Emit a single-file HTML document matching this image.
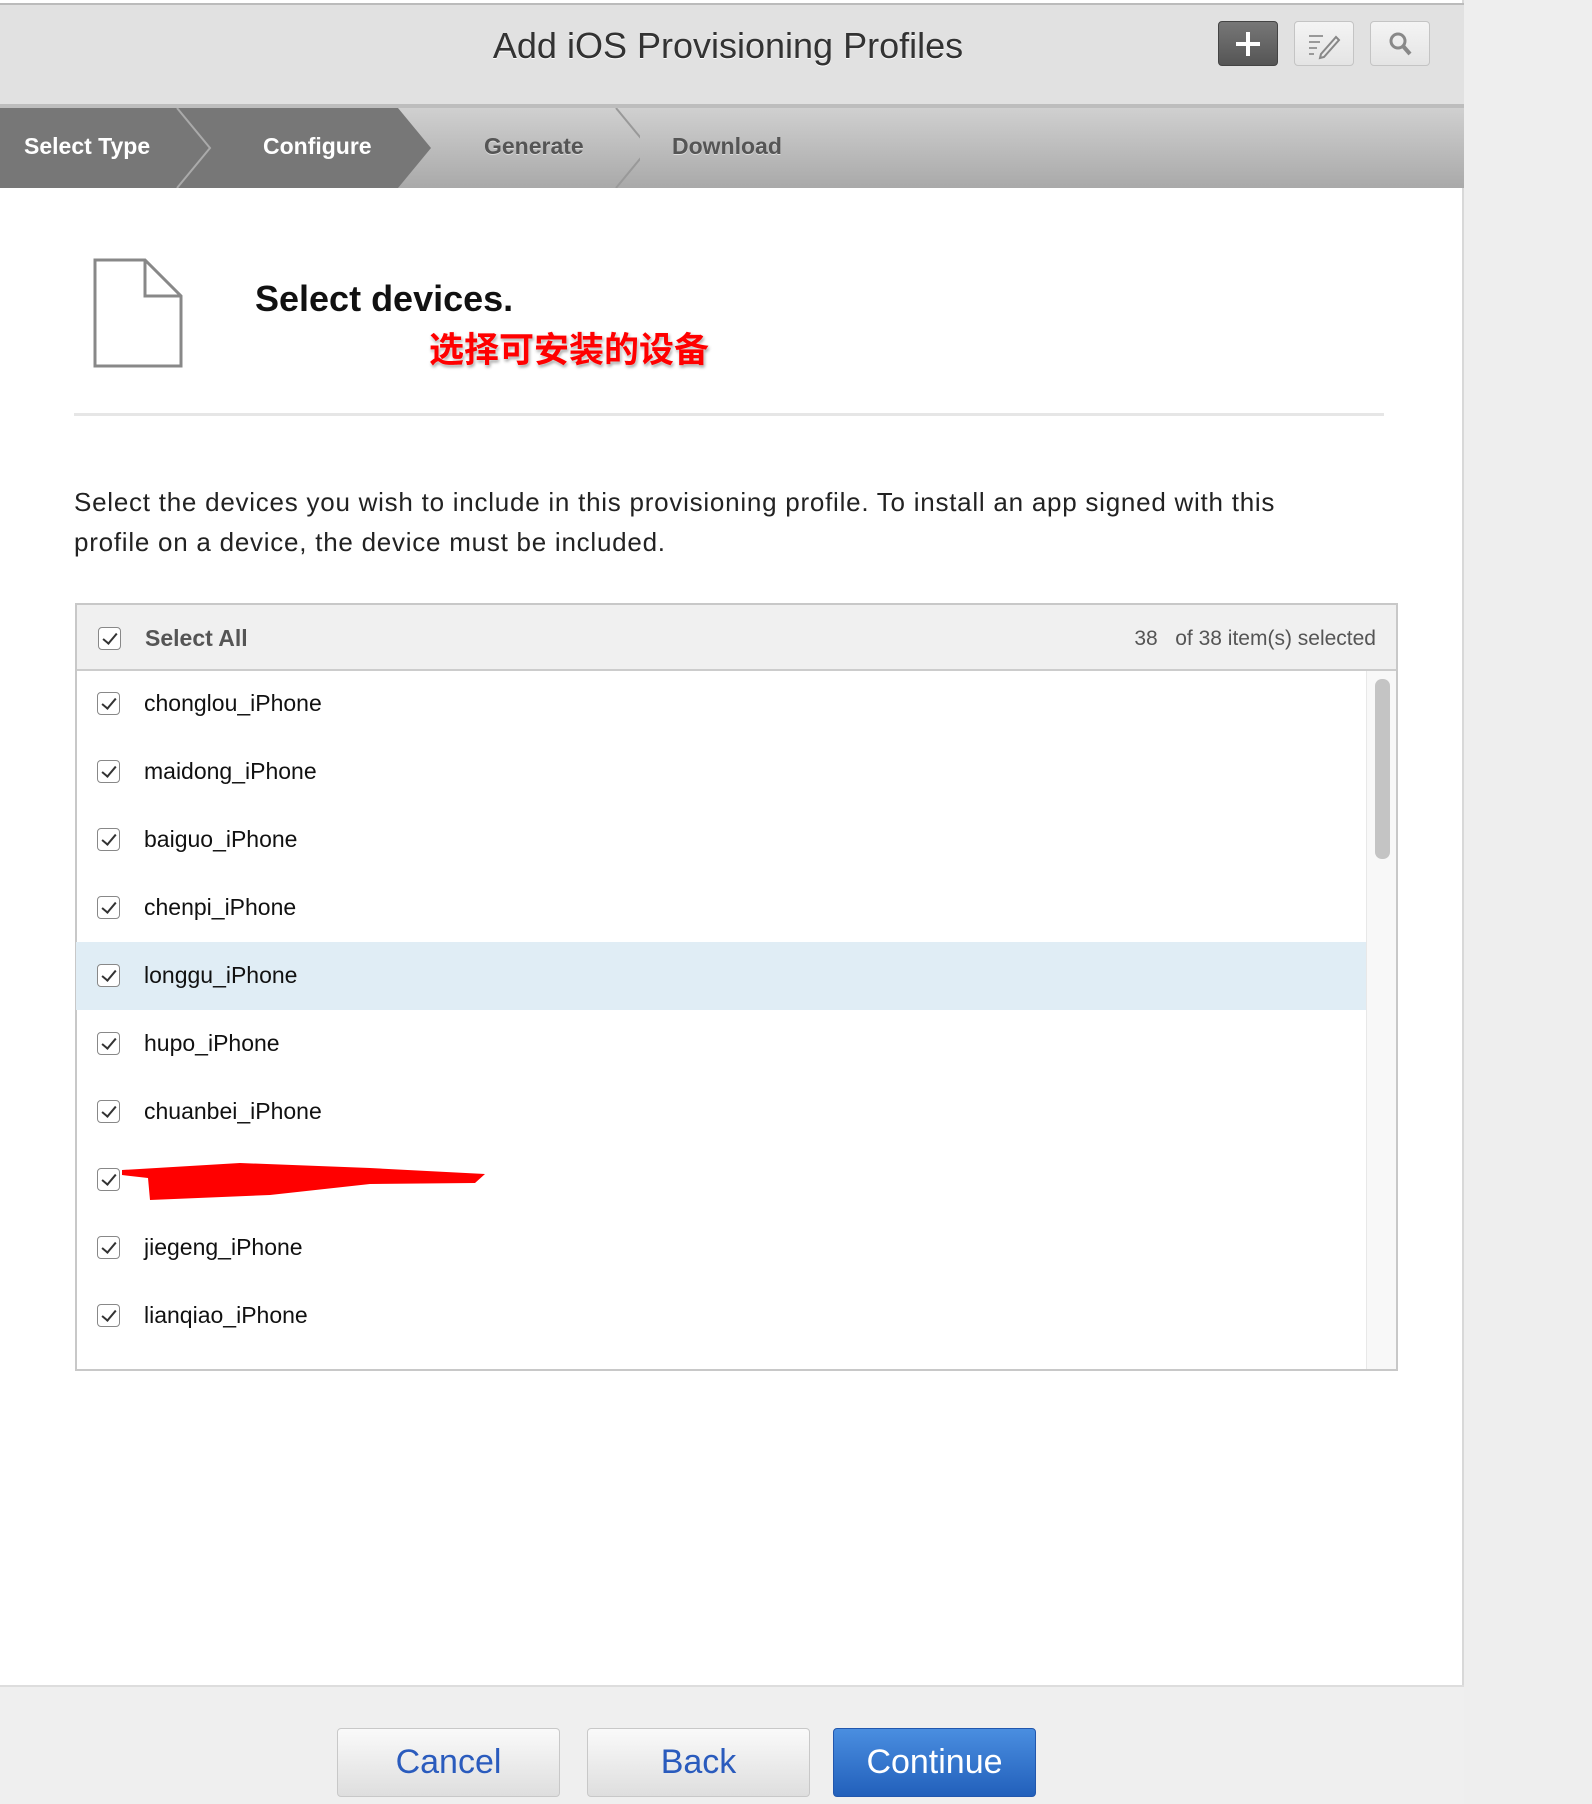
<!DOCTYPE html>
<html><head><meta charset="utf-8"><style>
*{margin:0;padding:0;box-sizing:border-box}
body{width:1592px;height:1804px;background:#eeeeee;font-family:"Liberation Sans",Arial,sans-serif;position:relative;overflow:hidden}
.main{position:absolute;left:0;top:0;width:1464px;height:1804px;background:#fff;border-right:2px solid #d8d8d8}
.hdr{position:absolute;left:0;top:3px;width:1464px;height:102px;background:#e1e1e1;border-top:2px solid #bbb}
.hline{position:absolute;left:0;top:104px;width:1464px;height:4px;background:#bdbdbd}
.title{position:absolute;left:0;width:1456px;top:20px;text-align:center;font-size:36px;color:#333;text-shadow:0 1px 0 #fff}
.ib{position:absolute;top:21px;width:60px;height:45px;border:1px solid #c4c4c4;border-radius:4px;background:linear-gradient(#f4f4f4,#e4e4e4)}
.steps{position:absolute;left:0;top:108px;width:1464px;height:80px;background:linear-gradient(#d0d0d0,#a9a9a9)}
.st{position:absolute;top:25px;font-size:23px;font-weight:bold}
.s1{color:#fff}.s2{color:#555;text-shadow:0 1px 0 #ddd}
.cb{position:absolute;left:97px;width:23px;height:23px;border:1.5px solid #888;border-radius:4px;background:#fff}
.cb:after{content:"";position:absolute;left:7px;top:2px;width:6px;height:12px;border:solid #333;border-width:0 2px 2px 0;transform:rotate(40deg)}
.row{position:absolute;left:76px;width:1290px;height:68px}
.row span{position:absolute;left:68px;top:20px;font-size:23px;color:#111}
.row .cb{left:21px;top:22px}
.btn{position:absolute;top:1728px;height:69px;border:1px solid #c8c8c8;border-radius:4px;background:linear-gradient(#fafafa,#dedede);color:#2a5bbd;font-size:34px;text-align:center;line-height:66px}
</style></head><body>
<div class="main">
<div class="hdr"><div class="title">Add iOS Provisioning Profiles</div></div>
<div class="ib" style="left:1218px;background:linear-gradient(#777,#555);border-color:#444"><svg width="60" height="45"><path d="M29 10v24M17 22h24" stroke="#fff" stroke-width="4"/></svg></div>
<div class="ib" style="left:1294px"><svg width="60" height="45"><path d="M14 14h14M14 20h11M14 26h8M14 32h5" stroke="#999" stroke-width="2"/><path d="M26 32l15-17 3 3-15 17-4 1z" fill="none" stroke="#888" stroke-width="2"/></svg></div>
<div class="ib" style="left:1370px"><svg width="60" height="45"><circle cx="27" cy="19" r="7" fill="none" stroke="#888" stroke-width="3"/><path d="M32 24l7 8" stroke="#888" stroke-width="4"/></svg></div>
<div class="hline"></div>
<div class="steps">
<svg width="640" height="80" style="position:absolute;left:0;top:0"><path d="M0 0H398L431 40 398 80H0z" fill="#777"/><path d="M177 0l33 40-33 40" fill="none" stroke="#aaa" stroke-width="2"/><path d="M616 0l33 40-33 40" fill="none" stroke="#999" stroke-width="2"/></svg>
<div class="st s1" style="left:24px">Select Type</div>
<div class="st s1" style="left:263px">Configure</div>
<div class="st s2" style="left:484px">Generate</div>
<div class="st s2" style="left:672px">Download</div>
</div>
<svg style="position:absolute;left:93px;top:258px" width="90" height="112"><path d="M2 2H52L88 38V108H2z" fill="#fff" stroke="#888" stroke-width="3"/><path d="M52 2V38H88" fill="none" stroke="#888" stroke-width="3"/></svg>
<div style="position:absolute;left:255px;top:278px;font-size:36px;font-weight:bold;color:#111">Select devices.</div>
<div style="position:absolute;left:429px;top:322px;font-size:35px;font-weight:bold;color:#f00;font-family:'Liberation Sans','Noto Sans CJK SC',sans-serif;text-shadow:0 0 3px #fff,1px 2px 3px #888">选择可安装的设备</div>
<div style="position:absolute;left:74px;top:413px;width:1310px;height:3px;background:#e6e6e6"></div>
<div style="position:absolute;left:74px;top:482px;width:1250px;font-size:26px;line-height:40px;letter-spacing:0.75px;color:#222">Select the devices you wish to include in this provisioning profile. To install an app signed with this profile on a device, the device must be included.</div>
<div style="position:absolute;left:75px;top:603px;width:1323px;height:768px;border:2px solid #c8c8c8">
<div style="position:absolute;left:0;top:0;width:100%;height:66px;background:#f0f0f0;border-bottom:2px solid #ccc">
<div class="cb" style="left:21px;top:22px"></div>
<span style="position:absolute;left:68px;top:20px;font-size:23px;font-weight:bold;color:#555">Select All</span>
<span style="position:absolute;right:20px;top:22px;font-size:21px;color:#555">38&nbsp;&nbsp;&nbsp;of 38 item(s) selected</span>
</div>
<div style="position:absolute;right:0;top:66px;width:30px;bottom:0;background:#f8f8f8;border-left:1px solid #e8e8e8"><div style="position:absolute;left:8px;top:8px;width:15px;height:180px;background:#c4c4c4;border-radius:7px"></div></div>
</div>
<div class="row" style="top:670px"><div class="cb"></div><span>chonglou_iPhone</span></div>
<div class="row" style="top:738px"><div class="cb"></div><span>maidong_iPhone</span></div>
<div class="row" style="top:806px"><div class="cb"></div><span>baiguo_iPhone</span></div>
<div class="row" style="top:874px"><div class="cb"></div><span>chenpi_iPhone</span></div>
<div class="row" style="top:942px;background:#e0edf5"><div class="cb"></div><span>longgu_iPhone</span></div>
<div class="row" style="top:1010px"><div class="cb"></div><span>hupo_iPhone</span></div>
<div class="row" style="top:1078px"><div class="cb"></div><span>chuanbei_iPhone</span></div>
<div class="row" style="top:1146px"><div class="cb"></div></div>
<svg style="position:absolute;left:120px;top:1160px" width="370" height="40"><path d="M2 10L120 3 250 8 365 14 355 23 250 24 150 35 30 40 28 18 2 15z" fill="#f00"/></svg>
<div class="row" style="top:1214px"><div class="cb"></div><span>jiegeng_iPhone</span></div>
<div class="row" style="top:1282px"><div class="cb"></div><span>lianqiao_iPhone</span></div>
<div style="position:absolute;left:0;top:1685px;width:1464px;height:119px;background:#efefef;border-top:2px solid #ddd"></div>
<div class="btn" style="left:337px;width:223px">Cancel</div>
<div class="btn" style="left:587px;width:223px">Back</div>
<div class="btn" style="left:833px;width:203px;background:linear-gradient(#4a8ee0,#2260bb);border-color:#2257ad;color:#fff">Continue</div>
</div>
</body></html>
